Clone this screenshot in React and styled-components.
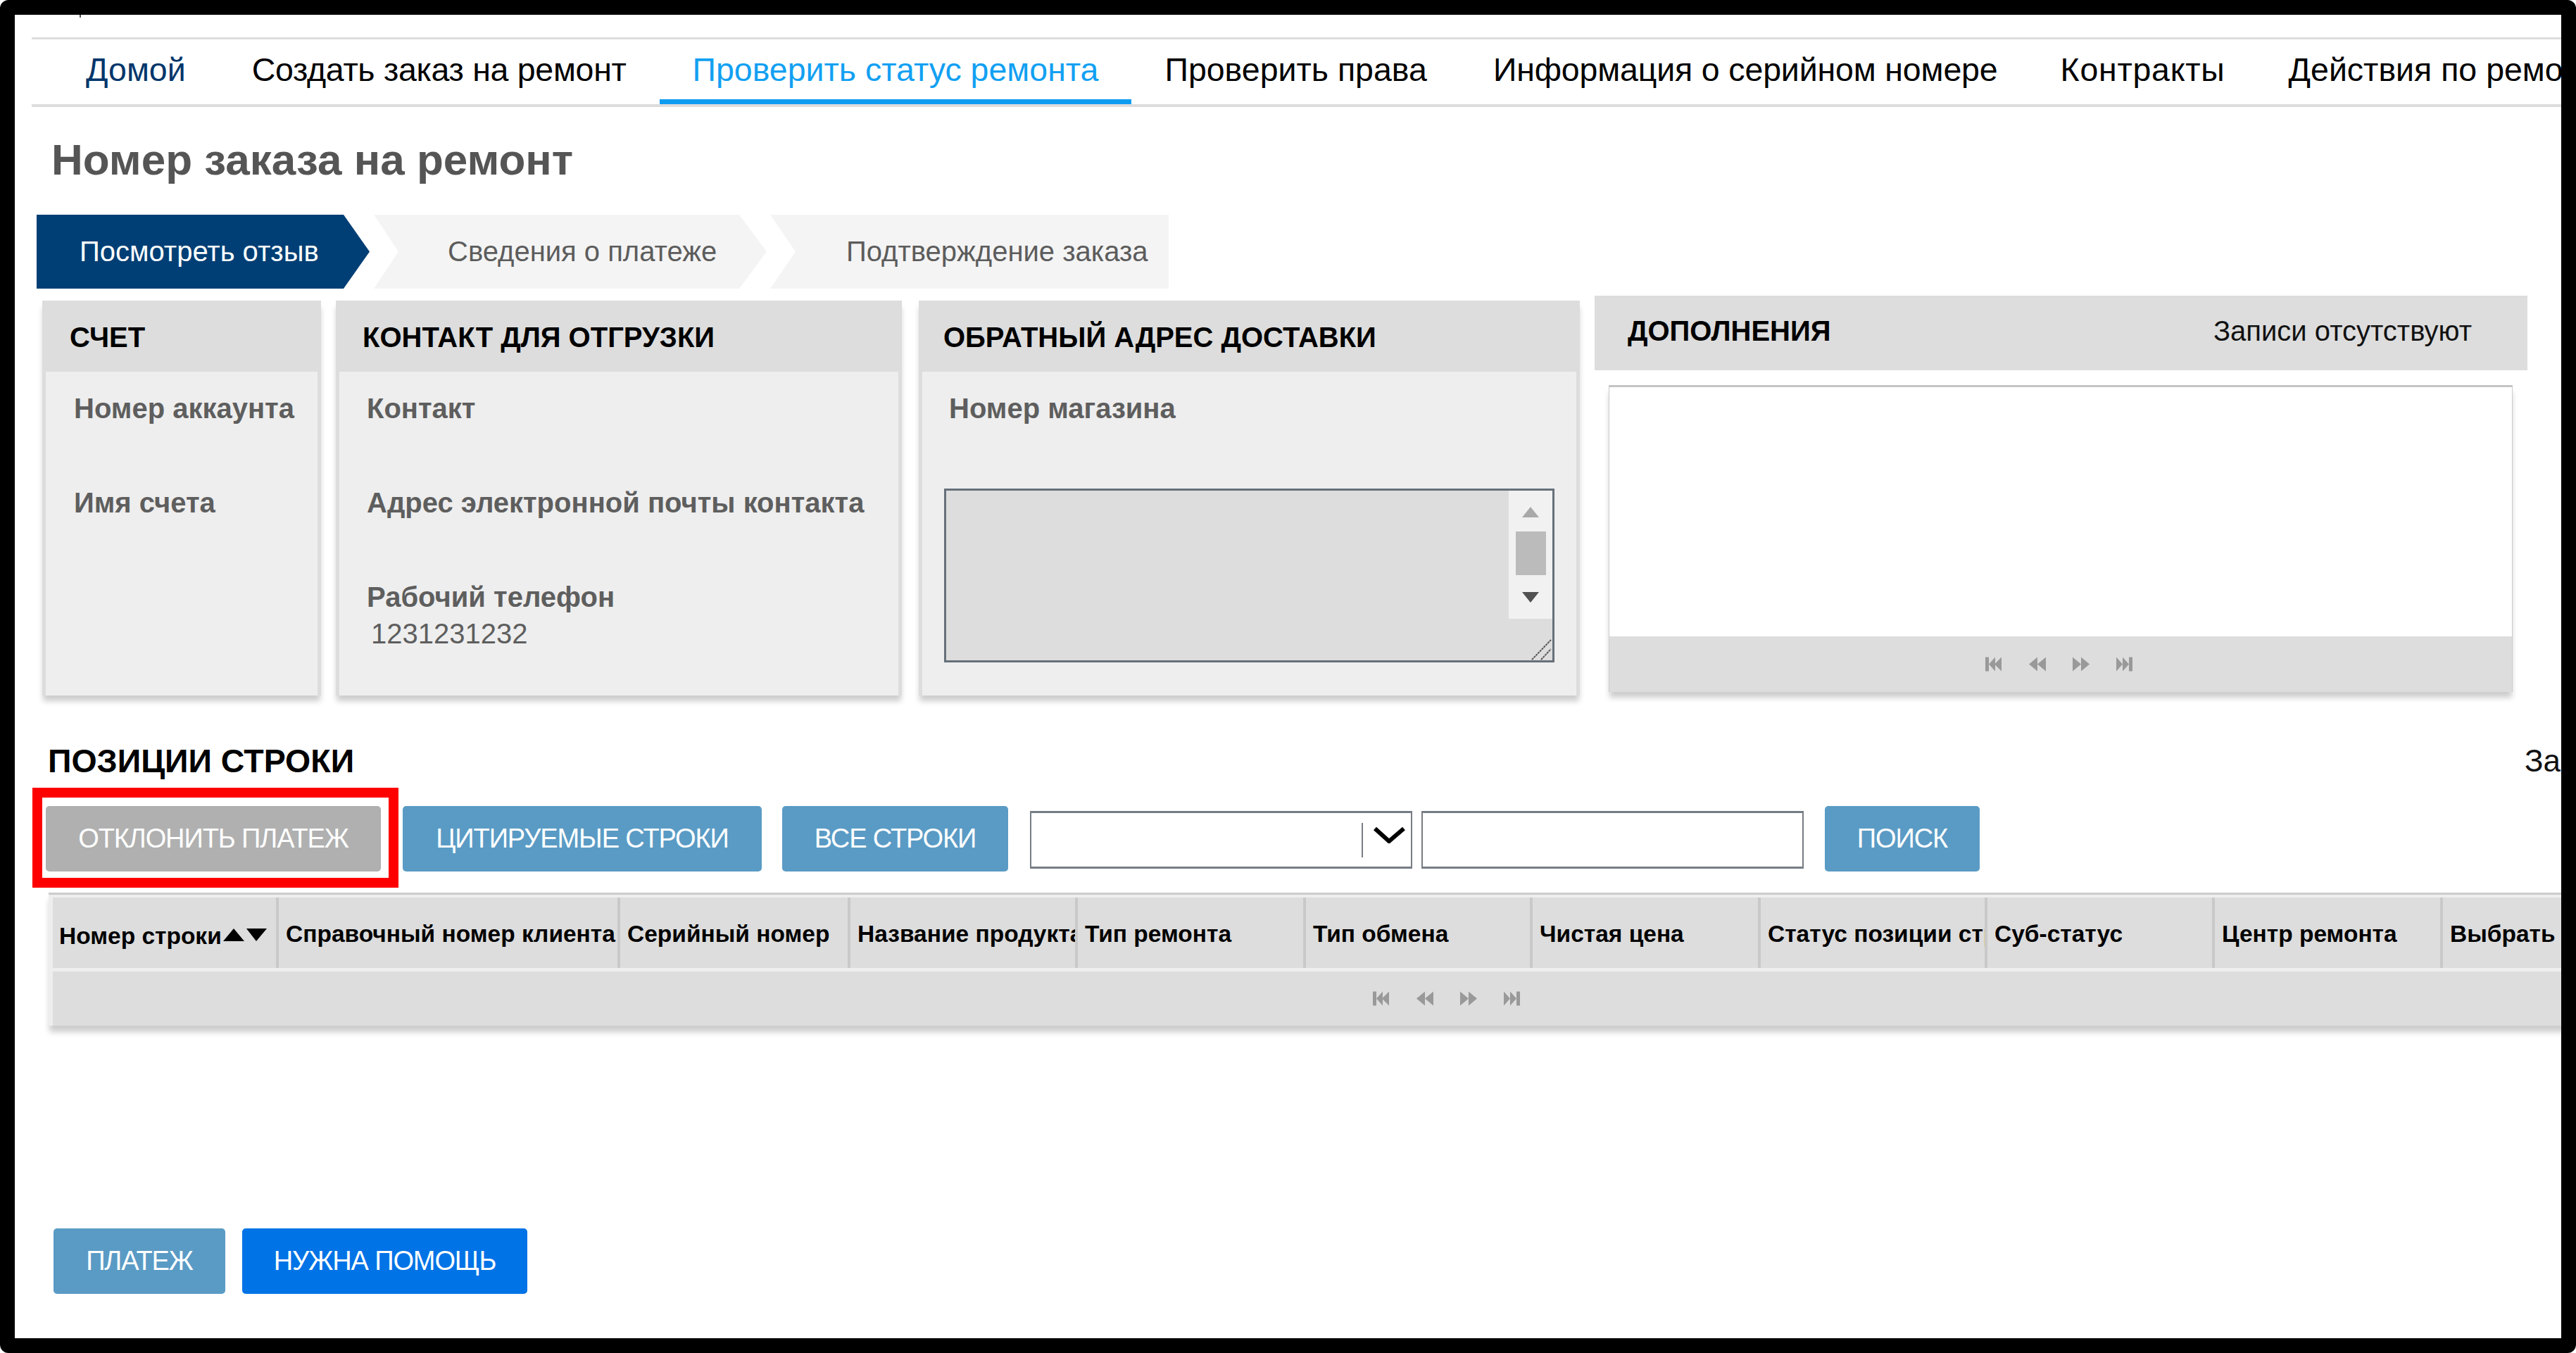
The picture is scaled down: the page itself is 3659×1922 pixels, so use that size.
import React from 'react';
import styled, { createGlobalStyle } from 'styled-components';

const GlobalStyle = createGlobalStyle`
	html, body {
		margin: 0;
		padding: 0;
		background: #fff;
		overflow: hidden;
	}
	* {
		box-sizing: border-box;
	}
`;

const Frame = styled.div`
	width: 3659px;
	height: 1922px;
	border: 21px solid #000;
	border-radius: 12px;
	background: #fff;
	overflow: hidden;
	font-family: 'Liberation Sans', Arial, sans-serif;
`;

const CutOff = styled.div`
	width: 2px;
	height: 4px;
	margin-left: 92px;
	background: #555;
`;

const TopRule = styled.div`
	height: 3px;
	margin: 28px 0 0 24px;
	background: #ddd;
`;

const Nav = styled.nav`
	display: flex;
	margin-left: 24px;
	padding-left: 30px;
	border-bottom: 4px solid #ddd;
	white-space: nowrap;
`;

const Tab = styled.a`
	flex: none;
	height: 92px;
	padding: 0 ${({ $right }) => $right || 47}px 0 47px;
	display: flex;
	align-items: center;
	font-size: 46.5px;
	letter-spacing: ${({ $spacing }) => $spacing || 0}px;
	color: ${({ $active, $muted }) => ($active ? '#12a0f2' : $muted ? '#00366b' : '#000')};
	border-bottom: 7px solid ${({ $active }) => ($active ? '#0d9cf0' : 'transparent')};
`;

const Title = styled.h1`
	margin: 0;
	height: 153px;
	padding-left: 52px;
	font-size: 62px;
	line-height: 149px;
	font-weight: 700;
	color: #555;
`;

const Steps = styled.div`
	display: flex;
	height: 105px;
	margin-left: 31px;
`;

const Step = styled.div`
	flex: none;
	width: ${({ $w }) => $w}px;
	margin-left: ${({ $gap }) => $gap}px;
	padding-left: ${({ $pad }) => $pad}px;
	display: flex;
	align-items: center;
	font-size: 40px;
	white-space: nowrap;
	color: ${({ $active }) => ($active ? '#fff' : '#5c5c5c')};
	background: ${({ $active }) => ($active ? '#003f75' : '#f4f4f4')};
	clip-path: ${({ $shape }) => $shape};
`;

const Panels = styled.div`
	display: flex;
	align-items: flex-start;
	margin: 10px 0 0 39px;
`;

const Panel = styled.section`
	flex: none;
	width: ${({ $w }) => $w}px;
	height: 561px;
	margin: 7px ${({ $gap }) => $gap}px 0 0;
	padding: 0 5px;
	background: #ddd;
	box-shadow: 0 9px 8px -1px rgba(0, 0, 0, 0.2);
`;

const PanelHead = styled.h2`
	margin: 0;
	height: 101px;
	padding-left: ${({ $pad }) => $pad}px;
	font-size: 40px;
	line-height: 105px;
	font-weight: 700;
	color: #000;
	white-space: nowrap;
`;

const PanelBody = styled.div`
	height: 460px;
	padding: 26px 0 0 ${({ $pad }) => $pad}px;
	background: #eee;
`;

const Field = styled.div`
	height: 134px;
	font-size: 40px;
	line-height: 52px;
	font-weight: 700;
	color: #5e5e5e;
	white-space: nowrap;
`;

const FieldValue = styled.div`
	padding-left: 6px;
	font-weight: 400;
	font-size: 40px;
`;

const TextBox = styled.div`
	display: flex;
	justify-content: flex-end;
	width: 867px;
	height: 247px;
	margin: 6px 0 0 -7px;
	border: 3px solid #667079;
	background: #ddd;
`;

const ScrollColumn = styled.div`
	width: 62px;
	display: flex;
	flex-direction: column;
`;

const ScrollTrack = styled.div`
	height: 182px;
	display: flex;
	flex-direction: column;
	align-items: center;
	padding-top: 23px;
	background: #f1f1f1;
`;

const ScrollThumb = styled.div`
	width: 43px;
	height: 62px;
	margin: 20px 0 24px;
	background: #bbb;
`;

const Resizer = styled.div`
	flex: 1;
	display: flex;
	align-items: flex-end;
	justify-content: flex-end;
`;

const ExtraPanel = styled.section`
	flex: none;
	width: 1325px;
`;

const ExtraHead = styled.div`
	height: 106px;
	padding: 0 79px 0 47px;
	display: flex;
	justify-content: space-between;
	line-height: 100px;
	background: #ddd;
	white-space: nowrap;
`;

const ExtraTitle = styled.h2`
	margin: 0;
	font-size: 40px;
	font-weight: 700;
	color: #000;
`;

const ExtraCount = styled.span`
	font-size: 40px;
	color: #111;
`;

const ExtraBox = styled.div`
	width: 1284px;
	height: 436px;
	margin: 21px 0 0 20px;
	display: flex;
	flex-direction: column;
	border: 1px solid #ccc;
	border-top: 3px solid #c4c4c4;
	border-bottom: none;
	box-shadow: 0 9px 8px -1px rgba(0, 0, 0, 0.2);
`;

const ExtraEmpty = styled.div`
	flex: 1;
	background: #fff;
`;

const PagerBar = styled.div`
	flex: none;
	height: ${({ $h }) => $h}px;
	padding-right: 4px;
	display: flex;
	align-items: center;
	justify-content: center;
	gap: ${({ $gap }) => $gap}px;
	background: #ddd;
`;

const PagerGlyph = styled.svg`
	width: 24px;
	height: 21px;
	fill: #999;
	filter: blur(0.7px);
`;

const SectionRow = styled.div`
	display: flex;
	height: 50px;
	margin: 68px 0 0 47px;
	line-height: 50px;
	white-space: nowrap;
`;

const SectionTitle = styled.h2`
	flex: none;
	width: 3518px;
	margin: 0;
	font-size: 46.5px;
	font-weight: 700;
	color: #000;
`;

const SectionCount = styled.span`
	flex: none;
	font-size: 44px;
	color: #111;
`;

const Toolbar = styled.div`
	display: flex;
	align-items: flex-start;
	margin: 13px 0 0 25px;
`;

const Highlight = styled.div`
	flex: none;
	padding: 12px 11px 9px 5px;
	border: 14px solid #f00;
`;

const ActionButton = styled.button`
	flex: none;
	width: ${({ $w }) => $w}px;
	height: 93px;
	margin: ${({ $top }) => $top || 0}px 0 0 ${({ $gap }) => $gap || 0}px;
	padding: 0;
	border: none;
	border-radius: 5px;
	font-family: inherit;
	font-size: 38px;
	letter-spacing: -1.1px;
	white-space: nowrap;
	color: #fff;
	background: ${({ $tone }) =>
		$tone === 'off' ? '#b0b0b0' : $tone === 'bright' ? '#0073e6' : '#5a9bc5'};
`;

const SelectBox = styled.div`
	flex: none;
	width: 543px;
	height: 82px;
	margin: 33px 0 0 31px;
	display: flex;
	align-items: center;
	justify-content: flex-end;
	border: 2px solid #777d84;
	border-width: 3px 2px;
	background: #fff;
`;

const SelectDivider = styled.div`
	width: 2px;
	height: 49px;
	margin-right: 15px;
	background: #777d84;
`;

const SelectArrow = styled.svg`
	width: 45px;
	height: 24px;
	margin: 0 8px 14px 0;
`;

const SearchField = styled.input`
	flex: none;
	width: 543px;
	height: 82px;
	margin: 33px 0 0 13px;
	border: 2px solid #777d84;
	border-width: 3px 2px;
	background: #fff;
`;

const LinesTable = styled.div`
	width: 3970px;
	margin: 7px 0 0 48px;
	padding: 4px 0 0 6px;
	border-top: 3px solid #ccc;
	background: #eee;
	box-shadow: 0 10px 8px -1px rgba(0, 0, 0, 0.2);
`;

const HeaderRow = styled.div`
	display: flex;
	height: 100px;
	margin-bottom: 5px;
`;

const HeaderCell = styled.div`
	flex: none;
	width: ${({ $w }) => $w}px;
	display: flex;
	align-items: center;
	padding: ${({ $sorted }) => ($sorted ? '10px 0 0 9px' : '3px 0 0 10px')};
	border-right: 4px solid #c9c9c9;
	overflow: hidden;
	font-size: 33.5px;
	font-weight: 700;
	white-space: nowrap;
	color: #000;
	background: #ddd;
`;

const SortArrows = styled.svg`
	flex: none;
	width: 62px;
	height: 18px;
	margin: 0 0 4px 2px;
`;

const BottomBar = styled.div`
	display: flex;
	margin: 288px 0 0 55px;
`;

const columns = [
	{ name: 'Справочный номер клиента', w: 485 },
	{ name: 'Серийный номер', w: 327 },
	{ name: 'Название продукта', w: 323 },
	{ name: 'Тип ремонта', w: 324 },
	{ name: 'Тип обмена', w: 322 },
	{ name: 'Чистая цена', w: 324 },
	{ name: 'Статус позиции строки', w: 322 },
	{ name: 'Суб-статус', w: 323 },
	{ name: 'Центр ремонта', w: 324 },
	{ name: 'Выбрать', w: 324 },
];

const pagerPaths = {
	first: 'M0 0h5v20H0zM5 10L14 0v20zM13 10L23 0v20z',
	prev: 'M0 10L12 0v20zM12 10L24 0v20z',
	next: 'M0 0l12 10L0 20zM12 0l12 10-12 10z',
	last: 'M0 0l9 10-9 10zM9 0l9 10-9 10zM18 0h5v20h-5z',
};

const PagerIcon = ({ kind }) => (
	<PagerGlyph viewBox="0 0 24 20">
		<path d={pagerPaths[kind]} />
	</PagerGlyph>
);

const Pager = () => (
	<>
		<PagerIcon kind="first" />
		<PagerIcon kind="prev" />
		<PagerIcon kind="next" />
		<PagerIcon kind="last" />
	</>
);

const App = () => (
	<Frame>
		<GlobalStyle />
		<CutOff />
		<TopRule />
		<Nav>
			<Tab $muted>Домой</Tab>
			<Tab $spacing={-0.3}>Создать заказ на ремонт</Tab>
			<Tab $active>Проверить статус ремонта</Tab>
			<Tab>Проверить права</Tab>
			<Tab $spacing={-0.15} $right={42}>Информация о серийном номере</Tab>
			<Tab $spacing={0.75} $right={43}>Контракты</Tab>
			<Tab>Действия по ремонту</Tab>
		</Nav>
		<Title>Номер заказа на ремонт</Title>
		<Steps>
			<Step
				$active
				$w={473}
				$pad={61}
				$shape="polygon(0 0, 436px 0, 100% 50%, 436px 100%, 0 100%)"
			>
				Посмотреть отзыв
			</Step>
			<Step
				$w={558}
				$gap={6}
				$pad={105}
				$shape="polygon(0 0, 519px 0, 100% 50%, 519px 100%, 0 100%, 35px 50%)"
			>
				Сведения о платеже
			</Step>
			<Step
				$w={566}
				$gap={5}
				$pad={108}
				$shape="polygon(0 0, 100% 0, 100% 100%, 0 100%, 36px 50%)"
			>
				Подтверждение заказа
			</Step>
		</Steps>
		<Panels>
			<Panel $w={396} $gap={21}>
				<PanelHead $pad={34}>СЧЕТ</PanelHead>
				<PanelBody $pad={40}>
					<Field>Номер аккаунта</Field>
					<Field>Имя счета</Field>
				</PanelBody>
			</Panel>
			<Panel $w={804} $gap={24}>
				<PanelHead $pad={33}>КОНТАКТ ДЛЯ ОТГРУЗКИ</PanelHead>
				<PanelBody $pad={39}>
					<Field>Контакт</Field>
					<Field>Адрес электронной почты контакта</Field>
					<Field>
						Рабочий телефон
						<FieldValue>1231231232</FieldValue>
					</Field>
				</PanelBody>
			</Panel>
			<Panel $w={939} $gap={21}>
				<PanelHead $pad={30}>ОБРАТНЫЙ АДРЕС ДОСТАВКИ</PanelHead>
				<PanelBody $pad={38}>
					<Field>Номер магазина</Field>
					<TextBox>
						<ScrollColumn>
							<ScrollTrack>
								<svg width="24" height="15" viewBox="0 0 24 15">
									<path d="M12 0l12 15H0z" fill="#a9a9a9" />
								</svg>
								<ScrollThumb />
								<svg width="24" height="15" viewBox="0 0 24 15">
									<path d="M0 0h24L12 15z" fill="#505050" />
								</svg>
							</ScrollTrack>
							<Resizer>
								<svg width="30" height="30" viewBox="0 0 30 30" fill="none" stroke="#555" strokeWidth="2" strokeDasharray="3 1">
									<path d="M1 29L28 1M14 29L28 14" />
								</svg>
							</Resizer>
						</ScrollColumn>
					</TextBox>
				</PanelBody>
			</Panel>
			<ExtraPanel>
				<ExtraHead>
					<ExtraTitle>ДОПОЛНЕНИЯ</ExtraTitle>
					<ExtraCount>Записи отсутствуют</ExtraCount>
				</ExtraHead>
				<ExtraBox>
					<ExtraEmpty />
					<PagerBar $h={79} $gap={38}>
						<Pager />
					</PagerBar>
				</ExtraBox>
			</ExtraPanel>
		</Panels>
		<SectionRow>
			<SectionTitle>ПОЗИЦИИ СТРОКИ</SectionTitle>
			<SectionCount>Записи отсутствуют</SectionCount>
		</SectionRow>
		<Toolbar>
			<Highlight>
				<ActionButton $tone="off" $w={476}>ОТКЛОНИТЬ ПЛАТЕЖ</ActionButton>
			</Highlight>
			<ActionButton $w={510} $gap={6} $top={26}>ЦИТИРУЕМЫЕ СТРОКИ</ActionButton>
			<ActionButton $w={321} $gap={29} $top={26}>ВСЕ СТРОКИ</ActionButton>
			<SelectBox>
				<SelectDivider />
				<SelectArrow viewBox="0 0 45 24" fill="none" stroke="#000" strokeWidth="6">
					<path d="M2 3l20 18L43 3" />
				</SelectArrow>
			</SelectBox>
			<SearchField />
			<ActionButton $w={220} $gap={30} $top={26}>ПОИСК</ActionButton>
		</Toolbar>
		<LinesTable>
			<HeaderRow>
				<HeaderCell $w={321} $sorted>
					Номер строки
					<SortArrows viewBox="0 0 62 18">
						<path d="M15 0l15 18H0zM33 0h29L47 18z" fill="#000" />
					</SortArrows>
				</HeaderCell>
				{columns.map((col) => (
					<HeaderCell key={col.name} $w={col.w}>
						{col.name}
					</HeaderCell>
				))}
			</HeaderRow>
			<PagerBar $h={77} $gap={38}>
				<Pager />
			</PagerBar>
		</LinesTable>
		<BottomBar>
			<ActionButton $w={244}>ПЛАТЕЖ</ActionButton>
			<ActionButton $tone="bright" $w={405} $gap={24}>НУЖНА ПОМОЩЬ</ActionButton>
		</BottomBar>
	</Frame>
);

export default App;
